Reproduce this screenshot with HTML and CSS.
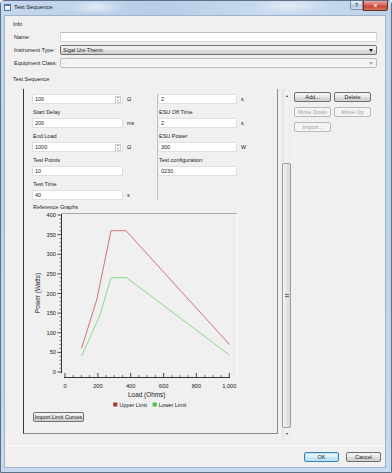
FILE: index.html
```html
<!DOCTYPE html>
<html lang="en">
<head>
  <meta charset="UTF-8">
  <title>Test Sequence</title>
  <link rel="stylesheet" href="styles.css">
</head>
<body>
  <div class="window">
    <div class="titlebar">
      <span class="app-icon"></span>
      <span class="title">Test Sequence</span>
      <span class="help-btn">?</span>
      <span class="close-btn">x</span>
    </div>

    <div class="client">
      <div class="section-title">Info</div>
      <div class="info-grid">
        <span class="lbl">Name:</span>
        <div class="textbox"></div>
        <span class="lbl">Instrument Type:</span>
        <div class="combo">Sigal Uni-Therm<span class="arrow"></span></div>
        <span class="lbl">Equipment Class:</span>
        <div class="combo disabled">-<span class="arrow"></span></div>
      </div>

      <div class="section-title seq-title">Test Sequence</div>
      <div class="seq-row">
        <div class="panel">
          <div class="fields">
            <div class="col left">
              <div class="field"><div class="textbox">100<span class="spin"><i class="up"></i><i class="down"></i></span></div><span class="unit">Ω</span></div>
              <div class="label">Start Delay</div>
              <div class="field"><div class="textbox">200</div><span class="unit">ms</span></div>
              <div class="label">End Load</div>
              <div class="field"><div class="textbox">1000<span class="spin"><i class="up"></i><i class="down"></i></span></div><span class="unit">Ω</span></div>
              <div class="label">Test Points</div>
              <div class="field"><div class="textbox">10</div></div>
              <div class="label">Test Time</div>
              <div class="field"><div class="textbox">40</div><span class="unit">s</span></div>
            </div>
            <div class="divider"></div>
            <div class="col right">
              <div class="field"><div class="textbox">2</div><span class="unit">s</span></div>
              <div class="label">ESU Off Time</div>
              <div class="field"><div class="textbox">2</div><span class="unit">s</span></div>
              <div class="label">ESU Power</div>
              <div class="field"><div class="textbox">300</div><span class="unit">W</span></div>
              <div class="label">Test configuration:</div>
              <div class="field"><div class="textbox">0230</div></div>
            </div>
          </div>

          <div class="graph-title">Reference Graphs</div>
          <svg class="chart" width="245" height="199" viewBox="0 0 245 199">
            <!-- plot frame -->
            <line x1="29.5" y1="2.5" x2="205" y2="2.5" stroke="#a8a8a8" stroke-width="1"/>
            <line x1="205.5" y1="2.5" x2="205.5" y2="166" stroke="#fbfbfb" stroke-width="1"/>

            <!-- y axis -->
            <line x1="29.5" y1="3" x2="29.5" y2="162" stroke="#333" stroke-width="1"/>
            <path stroke="#555" stroke-width="0.8" fill="none"
              d="M27.5 157.08h2M27.5 153.15h2M27.5 149.23h2M27.5 145.3h2
                 M27.5 137.45h2M27.5 133.53h2M27.5 129.6h2M27.5 125.68h2
                 M27.5 117.83h2M27.5 113.9h2M27.5 109.98h2M27.5 106.05h2
                 M27.5 98.2h2M27.5 94.28h2M27.5 90.35h2M27.5 86.43h2
                 M27.5 78.58h2M27.5 74.65h2M27.5 70.73h2M27.5 66.8h2
                 M27.5 58.95h2M27.5 55.03h2M27.5 51.1h2M27.5 47.18h2
                 M27.5 39.33h2M27.5 35.4h2M27.5 31.48h2M27.5 27.55h2
                 M27.5 19.7h2M27.5 15.78h2M27.5 11.85h2M27.5 7.93h2"/>
            <path stroke="#333" stroke-width="0.9" fill="none"
              d="M25.5 161h4M25.5 141.38h4M25.5 121.75h4M25.5 102.13h4M25.5 82.5h4
                 M25.5 62.88h4M25.5 43.25h4M25.5 23.63h4M25.5 4h4"/>
            <g class="tick-label" text-anchor="end">
              <text x="24" y="6">400</text>
              <text x="24" y="25.6">350</text>
              <text x="24" y="45.2">300</text>
              <text x="24" y="64.9">250</text>
              <text x="24" y="84.5">200</text>
              <text x="24" y="104.1">150</text>
              <text x="24" y="123.7">100</text>
              <text x="24" y="143.4">50</text>
              <text x="24" y="163">0</text>
            </g>
            <text class="axis-title" transform="translate(8,82) rotate(-90)" text-anchor="middle">Power (Watts)</text>

            <!-- x axis -->
            <line x1="32" y1="166.5" x2="198" y2="166.5" stroke="#333" stroke-width="1"/>
            <path stroke="#555" stroke-width="0.8" fill="none"
              d="M41.2 166v-2M49.4 166v-2M57.6 166v-2M74.1 166v-2M82.3 166v-2M90.5 166v-2
                 M106.9 166v-2M115.1 166v-2M123.4 166v-2M139.8 166v-2M148 166v-2M156.2 166v-2
                 M172.7 166v-2M180.9 166v-2M189.1 166v-2"/>
            <path stroke="#333" stroke-width="0.9" fill="none"
              d="M33 166v-4M65.9 166v-4M98.7 166v-4M131.6 166v-4M164.4 166v-4M197.3 166v-4"/>
            <g class="tick-label" text-anchor="middle">
              <text x="33" y="177">0</text>
              <text x="65.9" y="177">200</text>
              <text x="98.7" y="177">400</text>
              <text x="131.6" y="177">600</text>
              <text x="164.4" y="177">800</text>
              <text x="197.3" y="177">1,000</text>
            </g>
            <text class="axis-title" x="114.7" y="185.5" text-anchor="middle">Load (Ohms)</text>

            <!-- curves -->
            <polyline points="49.5,137.5 64.7,89 79,19.7 94,19.7 197.5,133.5" fill="none" stroke="#d77272" stroke-width="1"/>
            <polyline points="49.7,145 68,104 79,66.7 94.7,66.7 197.5,144" fill="none" stroke="#86dc86" stroke-width="1"/>

            <!-- legend -->
            <rect x="81.3" y="191.5" width="4" height="4" fill="#b3322d"/>
            <text class="legend" x="87.5" y="195.8">Upper Limit</text>
            <rect x="120.7" y="191.5" width="4" height="4" fill="#3fc23f"/>
            <text class="legend" x="126.7" y="195.8">Lower Limit</text>
          </svg>

          <button class="btn import-btn">Import Limit Curves</button>
        </div>

        <div class="scrollbar">
          <div class="sb-arrow"><i class="tri up"></i></div>
          <div class="sb-track"></div>
          <div class="sb-thumb"><span class="grip"></span></div>
          <div class="sb-arrow"><i class="tri down"></i></div>
        </div>

        <div class="side-buttons">
          <button class="btn">Add...</button>
          <button class="btn">Delete</button>
          <button class="btn" disabled>Move Down</button>
          <button class="btn" disabled>Move Up</button>
          <button class="btn" disabled>Import...</button>
        </div>
      </div>

      <div class="footer">
        <button class="btn default">OK</button>
        <button class="btn">Cancel</button>
      </div>
    </div>
  </div>
</body>
</html>
```

FILE: styles.css
```css
* {
  box-sizing: border-box;
}

body {
  margin: 0;
  width: 392px;
  height: 473px;
  overflow: hidden;
  font-family: "Liberation Sans", Arial, sans-serif;
  font-size: 5.5px;
  color: #1b1b1b;
  background: #fff;
}

.window {
  height: 473px;
  display: flex;
  flex-direction: column;
  border: 1px solid #5f7189;
  border-radius: 4px 4px 0 0;
  background: linear-gradient(#c3d7ee, #bcd1ea 40%, #c6d9ee);
}

/* title bar */
.titlebar {
  height: 14px;
  display: flex;
  align-items: flex-start;
  background:
    radial-gradient(ellipse 30px 8px at 95px 6px, rgba(255,255,255,0.55), transparent),
    radial-gradient(ellipse 40px 8px at 290px 5px, rgba(255,255,255,0.45), transparent),
    linear-gradient(to right, #c6d8ee, #b7cde7 40%, #c9dbef 70%, #bdd2ea);
}

.app-icon {
  width: 7px;
  height: 7px;
  margin: 3px 0 0 3px;
  border: 1px solid #56759f;
  border-top-width: 2px;
  background: linear-gradient(#ffffff, #dce7f4);
}

.title {
  margin-left: 3px;
  line-height: 13px;
  font-size: 5.8px;
  color: #1a1a1a;
}

.help-btn {
  margin-left: auto;
  width: 13px;
  height: 9px;
  border: 1px solid #7d8ea6;
  border-top: none;
  border-radius: 0 0 0 2px;
  background: linear-gradient(#e8f0f9, #c5d5ea 50%, #b3c7e1 51%, #c9d9ee);
  color: #2a3a55;
  font-size: 5px;
  font-weight: bold;
  text-align: center;
  line-height: 9px;
}

.close-btn {
  width: 25px;
  height: 10px;
  margin: 0 3px 0 0;
  border: 1px solid #6b2e29;
  border-top: none;
  border-radius: 0 0 3px 0;
  background: linear-gradient(#e9aaa0, #d45a4d 50%, #c23c2f 51%, #d9735f);
  color: #fff;
  font-size: 6px;
  font-weight: bold;
  text-align: center;
  line-height: 9px;
}

/* client area */
.client {
  flex: 1;
  margin: 0 5px 4px 3px;
  border: 1px solid #9fb3cb;
  background: #f0f0f0;
  padding: 4px 8px 0 8px;
  display: flex;
  flex-direction: column;
}

.section-title {
  line-height: 8px;
}

.seq-title {
  margin-top: 7px;
}

.info-grid {
  margin: 4px 0 0 1px;
  display: grid;
  grid-template-columns: 46px 1fr;
  row-gap: 3px;
  align-items: center;
}

.textbox {
  height: 10px;
  display: flex;
  align-items: center;
  padding-left: 2px;
  background: #fff;
  border: 1px solid #d3d7dc;
  border-top-color: #b9bcc2;
}

.combo {
  height: 10px;
  display: flex;
  align-items: center;
  justify-content: space-between;
  padding: 0 3px 0 2px;
  border: 1px solid #707070;
  border-radius: 2px;
  background: linear-gradient(#f2f2f2, #ebebeb 45%, #dddddd 50%, #cfcfcf);
}

.combo.disabled {
  border-color: #b7bcc0;
  background: #f4f4f4;
  color: #9a9a9a;
}

.arrow {
  width: 0;
  height: 0;
  border-left: 2px solid transparent;
  border-right: 2px solid transparent;
  border-top: 3px solid #111;
}

.combo.disabled .arrow {
  border-top-color: #a8a8a8;
}

/* test sequence area */
.seq-row {
  display: flex;
  align-items: flex-start;
  height: 351px;
  margin: 6px 0 0 10px;
}

.panel {
  width: 255px;
  height: 345px;
  padding-top: 5px;
  overflow: hidden;
  border-left: 1px solid #383838;
  border-right: 1px solid #8e8e8e;
  border-bottom: 1px solid #8a8a8a;
}

.fields {
  display: grid;
  grid-template-columns: 133px 1px 1fr;
}

.col {
  display: flex;
  flex-direction: column;
}

.col.left {
  padding-left: 8px;
}

.divider {
  background: #c4c4c4;
}

.field {
  display: flex;
  align-items: center;
  height: 10px;
}

.label + .field {
  margin-top: 2px;
}

.left .textbox {
  width: 91px;
}

.right .textbox {
  width: 79px;
}

.fields .textbox {
  border-color: #dde1e5;
}

.unit {
  margin-left: 4px;
}

.label {
  margin-top: 4px;
  padding-left: 1px;
  line-height: 8px;
}

.spin {
  margin-left: auto;
  margin-right: 1px;
  width: 6px;
  height: 7px;
  border: 1px solid #c9c9c9;
  display: flex;
  flex-direction: column;
  justify-content: space-around;
  align-items: center;
}

.spin i,
.tri {
  display: block;
  width: 0;
  height: 0;
  border-left: 1.5px solid transparent;
  border-right: 1.5px solid transparent;
}

.spin .up {
  border-bottom: 1.5px solid #555;
}

.spin .down {
  border-top: 1.5px solid #555;
}

.graph-title {
  margin-top: 3px;
  padding-left: 9px;
  line-height: 8px;
}

.chart {
  display: block;
  margin-left: 8px;
  font-family: "Liberation Sans", Arial, sans-serif;
}

.tick-label {
  font-size: 5.7px;
  fill: #222;
}

.axis-title {
  font-size: 6.4px;
  fill: #222;
}

.legend {
  font-size: 5.4px;
  fill: #222;
}

.btn {
  height: 10px;
  padding: 0;
  font: inherit;
  color: #1b1b1b;
  line-height: 8px;
  text-align: center;
  border: 1px solid #707070;
  border-radius: 2px;
  background: linear-gradient(#f2f2f2, #ebebeb 45%, #dddddd 50%, #cfcfcf);
}

.btn:disabled {
  border-color: #b5b9bd;
  background: #f4f4f4;
  color: #a0a0a0;
}

.btn.default {
  border-color: #3c7fb1;
  box-shadow: inset 0 0 0 1px #bfe4f8;
  background: linear-gradient(#eef7fd, #ddf1fc 45%, #c7e8fb 50%, #b7e0f7);
}

.import-btn {
  display: block;
  width: 51px;
  margin: 2px 0 0 9px;
}

/* scrollbar */
.scrollbar {
  width: 9px;
  height: 351px;
  margin-left: 4px;
  display: flex;
  flex-direction: column;
  background: linear-gradient(to right, #e2e2e2, #f3f3f3 40%, #ececec);
}

.sb-arrow {
  height: 13px;
  display: flex;
  align-items: center;
  justify-content: center;
}

.sb-arrow:last-child {
  height: 12px;
}

.tri.up {
  border-bottom: 2px solid #3a3a3a;
}

.tri.down {
  border-top: 2px solid #3a3a3a;
}

.sb-track {
  height: 61px;
}

.sb-thumb {
  height: 265px;
  border: 1px solid #9c9c9c;
  border-radius: 2px;
  background: linear-gradient(to right, #f6f6f6, #e4e4e4 50%, #d9d9d9);
  display: flex;
  align-items: center;
  justify-content: center;
}

.grip {
  width: 4px;
  height: 3px;
  border-top: 1px solid #666;
  border-bottom: 1px solid #666;
}

.side-buttons {
  margin: 3px 0 0 3px;
  display: grid;
  grid-template-columns: 37px 37px;
  column-gap: 3px;
  row-gap: 5px;
}

/* dialog buttons */
.footer {
  margin: 5px -8px 0 -8px;
  padding: 6px 4px 0 0;
  border-top: 1px solid #fbfbfb;
  display: flex;
  justify-content: flex-end;
  gap: 7px;
}

.footer .btn {
  width: 35px;
}
```
